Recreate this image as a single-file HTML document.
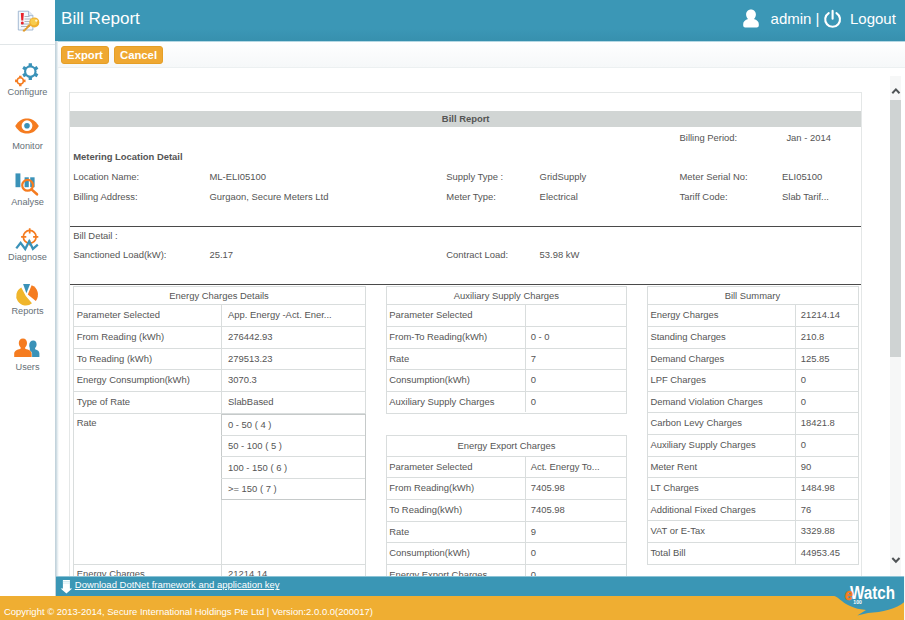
<!DOCTYPE html>
<html>
<head>
<meta charset="utf-8">
<title>Bill Report</title>
<style>
*{box-sizing:border-box;}
html,body{margin:0;padding:0;width:905px;height:620px;overflow:hidden;background:#fff;}
body{font-family:"Liberation Sans",Arial,sans-serif;font-size:9.43px;color:#555;position:relative;}
.abs{position:absolute;}
#side{position:absolute;left:0;top:0;width:56px;height:597px;background:#fff;}
#edge{position:absolute;left:55px;top:41px;width:4px;height:556px;background:linear-gradient(to right,#bfd0d9 0,#c9d8e0 30%,#e4ecf0 60%,#ffffff 100%);}
#logo{position:absolute;left:0;top:0;width:55px;height:45px;border-bottom:1px solid #e1e6e8;}
.nav{position:absolute;left:0;width:55px;text-align:center;font-size:9.2px;line-height:12px;color:#667077;white-space:nowrap;}
.ico{position:absolute;left:0;top:0;}
#hdr{position:absolute;left:55px;top:0;width:850px;height:41px;background:linear-gradient(to bottom,#3b97b6 0%,#3b97b6 70%,#3790ae 100%);color:#fff;}
#hdr .title{position:absolute;left:6px;top:9.3px;font-size:17.1px;line-height:20px;white-space:nowrap;}
#hdr .usr{position:absolute;top:9px;font-size:15px;line-height:20px;white-space:nowrap;}
#tool{position:absolute;left:58px;top:41px;width:847px;height:27px;background:linear-gradient(to bottom,#ffffff 0,#fafbfc 50%,#f6f8f9 100%);border-bottom:1px solid #ecf0f1;border-top:1px solid #b5d8e4;}
.btn{position:absolute;top:4px;height:18px;border-radius:3px;background:#efa832;border:1px solid #e59f27;color:#fff;font-weight:bold;font-size:11.3px;line-height:16px;text-align:center;white-space:nowrap;}
#content{position:absolute;left:0;top:68px;width:905px;height:508px;overflow:hidden;}
#sb{position:absolute;left:890px;top:76px;width:11px;height:500px;background:#f6f7f7;}
#sb .thumb{position:absolute;left:0;top:24.4px;width:11px;height:256.4px;background:#cfd3d3;}
#dl{position:absolute;left:56px;top:576px;width:848px;height:21px;background:#3a96b5;color:#fff;border-top:1px solid #8cc3d6;}
#dl span{position:absolute;left:18.8px;top:2.4px;font-size:9.48px;line-height:12px;color:#fff;text-decoration:underline;white-space:nowrap;}
#foot{position:absolute;left:0;top:596px;width:905px;height:24px;background:#efae32;color:#fff;}
#foot span{position:absolute;left:4px;top:10.4px;font-size:9.47px;line-height:12px;white-space:nowrap;}
.box{position:absolute;left:69px;top:92px;width:793px;height:520px;border:1px solid #e4e7e7;border-bottom:none;}
.gbar{position:absolute;left:70px;top:111px;width:791px;height:16px;background:#d1d5d4;}
.t{position:absolute;white-space:nowrap;line-height:12px;}
.b{font-weight:bold;}
.hl{position:absolute;height:1px;background:#4a4a4a;}
.tb{position:absolute;border:1px solid #d9dddd;}
.ln{position:absolute;background:#d9dddd;}
</style>
</head>
<body>
<div id="side">
<div id="logo"></div>
<svg class="ico" width="56" height="45" viewBox="0 0 56 45">
<path d="M18.3 11.2h10.200l4.400 4.400v14.400h-14.600z" fill="#f4f8fc" stroke="#8fa9c9" stroke-width="0.8"/>
<path d="M28.500 11.200v4.400h4.400" fill="#dfe9f4" stroke="#8fa9c9" stroke-width="0.7"/>
<path d="M24.500 16.500h5M24.500 19h6.500M24.500 21.500h6.500M21 24h9M21 26.500h9" stroke="#9aa6b4" stroke-width="0.8"/>
<path d="M20.800 13h3l-.5 7.600h-2z" fill="#e8222b"/><circle cx="22.300" cy="23" r="1.500" fill="#e8222b"/>
<path d="M31.800 24.500l-7.500 7.200l-1.600-.4l.3-1.500l1.500-.3l.2-1.300l1.400-.2l.3-1.400l2.500-2.300z" fill="#e09a2a"/>
<circle cx="34.300" cy="22.400" r="5" fill="#f0b02e"/><circle cx="33.800" cy="21.800" r="3.400" fill="#f7cc4e"/><circle cx="36.300" cy="20.600" r="1.200" fill="#fff4d0"/>
</svg>
<svg class="ico" width="56" height="400" viewBox="0 0 56 400">
<path fill="#3a92b8" d="M31.98 76.84 L31.95 79.94 L28.65 79.94 L28.62 76.84 L26.61 75.68 L23.91 77.20 L22.25 74.34 L24.92 72.76 L24.92 70.44 L22.25 68.86 L23.91 66.00 L26.61 67.52 L28.62 66.36 L28.65 63.26 L31.95 63.26 L31.98 66.36 L33.99 67.52 L36.69 66.00 L38.35 68.86 L35.68 70.44 L35.68 72.76 L38.35 74.34 L36.69 77.20 L33.99 75.68Z"/><circle cx="30.3" cy="71.6" r="6.3" fill="#3a92b8"/><circle cx="30.3" cy="71.6" r="4.1" fill="#fff"/>
<path fill="#f57c20" d="M21.42 83.68 L21.59 86.14 L19.01 86.14 L19.18 83.68 L17.52 82.02 L15.06 82.19 L15.06 79.61 L17.52 79.78 L19.18 78.12 L19.01 75.66 L21.59 75.66 L21.42 78.12 L23.08 79.78 L25.54 79.61 L25.54 82.19 L23.08 82.02Z"/><circle cx="20.3" cy="80.9" r="3.8" fill="#f57c20"/><circle cx="20.3" cy="80.9" r="2.3" fill="#fff"/>
<path fill="#f57c20" d="M15.2 126 C19 119.7 23 118.4 27 118.4 C31 118.4 35 119.7 38.8 126 C35 132.3 31 133.6 27 133.6 C23 133.6 19 132.3 15.2 126Z"/><circle cx="27" cy="125.7" r="5.4" fill="#fff"/><circle cx="27" cy="125.7" r="2.8" fill="#3a92b8"/>
<rect x="15.5" y="173.4" width="4.9" height="13.8" fill="#3a92b8"/><rect x="24.6" y="177.3" width="4.2" height="9.9" fill="#3a92b8"/><rect x="30.2" y="177.3" width="4.4" height="9.9" fill="#3a92b8"/>
<circle cx="27.6" cy="185.3" r="5.4" fill="none" stroke="#f57c20" stroke-width="2.2"/><path d="M31.8 189.6 L37 194.3" stroke="#f57c20" stroke-width="2.6" stroke-linecap="round"/>
<circle cx="29.7" cy="236.8" r="6.4" fill="none" stroke="#f57c20" stroke-width="1.7"/><path d="M29.7 228.20000000000002v5.2M29.7 245.4v-5.2M21.1 236.8h5.2M38.3 236.8h-5.2" stroke="#f57c20" stroke-width="1.7" fill="none"/>
<path d="M16.3 248.4 L20.6 242.8 L25.2 249 L29.2 241.2 L32.9 248.8 L37.8 244.6" fill="none" stroke="#3a92b8" stroke-width="2.3" stroke-linejoin="miter"/>
<path fill="#f0b62c" d="M25.80 296.00L31.97 303.35A9.6 9.6 0 1 1 21.29 287.52Z"/>
<path fill="#f57c20" d="M27.80 294.60L31.62 285.14A10.2 10.2 0 0 1 35.84 300.88Z"/>
<path fill="#3a92b8" d="M23.1 283.9 L30.1 283.9 L26.4 293.2Z"/>
<path fill="#3a92b8" d="M33.3 340.4c2 0 3.3 1.6 3.3 3.8c0 1.6-.6 2.9-1.5 3.7v1.3c2.6.8 4.3 1.9 4.3 4.2v3.6h-9.6v-9c-.4-.8-.6-1.800-.6-2.800c0-2.800 1.700-4.800 4.100-4.800z"/>
<path fill="#f57c20" stroke="#fff" stroke-width="0.9" paint-order="stroke" d="M23 338.400c2.500 0 4 2 4 4.600c0 1.800-.7 3.400-1.800 4.300v1.500c3.800 1 6.400 2.300 6.400 5v3.200h-17.400v-3.200c0-2.700 2.600-4 6.400-5v-1.500c-1.100-.9-1.800-2.500-1.800-4.300c0-2.600 1.600-4.600 4.200-4.600z"/>
</svg>
<div class="nav" style="top:85.8px">Configure</div>
<div class="nav" style="top:140.1px">Monitor</div>
<div class="nav" style="top:195.8px">Analyse</div>
<div class="nav" style="top:250.8px">Diagnose</div>
<div class="nav" style="top:305.1px">Reports</div>
<div class="nav" style="top:360.8px">Users</div>
</div>
<div id="edge"></div>
<div id="hdr">
<div class="title">Bill Report</div>
<svg class="ico" style="left:680px" width="120" height="41" viewBox="680 0 120 41">
<path fill="#fff" d="M696 9.400c2.900 0 4.900 2.200 4.900 5c0 1.900-.8 3.500-2 4.500c2.900.9 4.900 2.500 4.900 5v1.700c0 1.100-.9 2-2 2h-11.600c-1.100 0-2-.9-2-2v-1.700c0-2.500 2-4.100 4.900-5c-1.200-1-2-2.600-2-4.500c0-2.800 2-5 4.900-5z"/>
<path fill="none" stroke="#fff" stroke-width="2.100" stroke-linecap="round" d="M773.700 13.100a7.400 7.400 0 1 0 7.800 0M777.600 10.900v7.800"/>
</svg>
<div class="usr" style="left:715.6px">admin |</div>
<div class="usr" style="left:795px">Logout</div>
</div>
<div id="tool">
<div class="btn" style="left:3px;width:48px">Export</div>
<div class="btn" style="left:56px;width:49px">Cancel</div>
</div>
<div id="content">
<div class="box" style="top:24px"></div>
<div class="gbar" style="top:43px"></div>
<div class="t b" style="left:315.7px;width:300px;text-align:center;top:45.3px">Bill Report</div>
<div class="t " style="left:679.5px;top:63.5px;">Billing Period:</div>
<div class="t " style="left:786.4px;top:63.5px;">Jan - 2014</div>
<div class="t b" style="left:73.2px;top:82.5px;">Metering Location Detail</div>
<div class="t " style="left:73.2px;top:102.5px;">Location Name:</div>
<div class="t " style="left:209.5px;top:102.5px;">ML-ELI05100</div>
<div class="t " style="left:446.3px;top:102.5px;">Supply Type :</div>
<div class="t " style="left:539.6px;top:102.5px;">GridSupply</div>
<div class="t " style="left:679.5px;top:102.5px;">Meter Serial No:</div>
<div class="t " style="left:782.0px;top:102.5px;">ELI05100</div>
<div class="t " style="left:73.2px;top:123.3px;">Billing Address:</div>
<div class="t " style="left:209.5px;top:123.3px;">Gurgaon, Secure Meters Ltd</div>
<div class="t " style="left:446.3px;top:123.3px;">Meter Type:</div>
<div class="t " style="left:539.6px;top:123.3px;">Electrical</div>
<div class="t " style="left:679.5px;top:123.3px;">Tariff Code:</div>
<div class="t " style="left:782.0px;top:123.3px;">Slab Tarif...</div>
<div class="hl" style="left:70px;top:158px;width:791px"></div>
<div class="t " style="left:73.2px;top:162.2px;">Bill Detail :</div>
<div class="t " style="left:73.2px;top:181.2px;">Sanctioned Load(kW):</div>
<div class="t " style="left:209.5px;top:181.2px;">25.17</div>
<div class="t " style="left:446.3px;top:181.2px;">Contract Load:</div>
<div class="t " style="left:539.6px;top:181.2px;">53.98 kW</div>
<div class="hl" style="left:70px;top:216px;width:791px"></div>
<div class="tb" style="left:73.3px;top:217.5px;width:292.5px;height:400px"></div>
<div class="t " style="left:69.1px;width:300px;text-align:center;top:221.6px">Energy Charges Details</div>
<div class="ln" style="left:73.3px;top:236.4px;width:291.5px;height:1px"></div>
<div class="t " style="left:76.7px;top:241.4px;">Parameter Selected</div>
<div class="t " style="left:228.0px;top:241.4px;">App. Energy -Act. Ener...</div>
<div class="ln" style="left:73.3px;top:258.0px;width:291.5px;height:1px"></div>
<div class="t " style="left:76.7px;top:263.0px;">From Reading (kWh)</div>
<div class="t " style="left:228.0px;top:263.0px;">276442.93</div>
<div class="ln" style="left:73.3px;top:279.6px;width:291.5px;height:1px"></div>
<div class="t " style="left:76.7px;top:284.6px;">To Reading (kWh)</div>
<div class="t " style="left:228.0px;top:284.6px;">279513.23</div>
<div class="ln" style="left:73.3px;top:301.3px;width:291.5px;height:1px"></div>
<div class="t " style="left:76.7px;top:306.3px;">Energy Consumption(kWh)</div>
<div class="t " style="left:228.0px;top:306.3px;">3070.3</div>
<div class="ln" style="left:73.3px;top:322.9px;width:291.5px;height:1px"></div>
<div class="t " style="left:76.7px;top:327.9px;">Type of Rate</div>
<div class="t " style="left:228.0px;top:327.9px;">SlabBased</div>
<div class="ln" style="left:73.3px;top:344.5px;width:291.5px;height:1px"></div>
<div class="t " style="left:76.7px;top:348.7px;">Rate</div>
<div class="ln" style="left:221.4px;top:236.4px;width:1px;height:400px"></div>
<div class="tb" style="left:221.4px;top:345.6px;width:144.4px;height:86.4px;border-color:#c6caca"></div>
<div class="t " style="left:228.0px;top:350.9px;">0 - 50 ( 4 )</div>
<div class="ln" style="left:221.4px;top:367.0px;width:143.4px;height:1px"></div>
<div class="t " style="left:228.0px;top:372.2px;">50 - 100 ( 5 )</div>
<div class="ln" style="left:221.4px;top:388.3px;width:143.4px;height:1px"></div>
<div class="t " style="left:228.0px;top:393.6px;">100 - 150 ( 6 )</div>
<div class="ln" style="left:221.4px;top:409.7px;width:143.4px;height:1px"></div>
<div class="t " style="left:228.0px;top:414.9px;">&gt;= 150 ( 7 )</div>
<div class="ln" style="left:73.3px;top:496.3px;width:291.5px;height:1px"></div>
<div class="t " style="left:76.7px;top:499.9px;">Energy Charges</div>
<div class="t " style="left:228.0px;top:499.9px;">21214.14</div>
<div class="tb" style="left:386.3px;top:217.5px;width:241.2px;height:128.0px"></div>
<div class="t " style="left:356.4px;width:300px;text-align:center;top:221.6px">Auxiliary Supply Charges</div>
<div class="ln" style="left:386.3px;top:236.4px;width:240.2px;height:1px"></div>
<div class="t " style="left:389.3px;top:241.4px;">Parameter Selected</div>
<div class="ln" style="left:386.3px;top:258.0px;width:240.2px;height:1px"></div>
<div class="t " style="left:389.3px;top:263.0px;">From-To Reading(kWh)</div>
<div class="t " style="left:530.7px;top:263.0px;">0 - 0</div>
<div class="ln" style="left:386.3px;top:279.6px;width:240.2px;height:1px"></div>
<div class="t " style="left:389.3px;top:284.6px;">Rate</div>
<div class="t " style="left:530.7px;top:284.6px;">7</div>
<div class="ln" style="left:386.3px;top:301.3px;width:240.2px;height:1px"></div>
<div class="t " style="left:389.3px;top:306.3px;">Consumption(kWh)</div>
<div class="t " style="left:530.7px;top:306.3px;">0</div>
<div class="ln" style="left:386.3px;top:322.9px;width:240.2px;height:1px"></div>
<div class="t " style="left:389.3px;top:327.9px;">Auxiliary Supply Charges</div>
<div class="t " style="left:530.7px;top:327.9px;">0</div>
<div class="ln" style="left:524.5px;top:236.4px;width:1px;height:108.1px"></div>
<div class="tb" style="left:386.3px;top:366.6px;width:241.2px;height:173.5px"></div>
<div class="t " style="left:356.4px;width:300px;text-align:center;top:371.8px">Energy Export Charges</div>
<div class="ln" style="left:386.3px;top:387.8px;width:240.2px;height:1px"></div>
<div class="t " style="left:389.3px;top:392.8px;">Parameter Selected</div>
<div class="t " style="left:530.7px;top:392.8px;">Act. Energy To...</div>
<div class="ln" style="left:386.3px;top:409.4px;width:240.2px;height:1px"></div>
<div class="t " style="left:389.3px;top:414.4px;">From Reading(kWh)</div>
<div class="t " style="left:530.7px;top:414.4px;">7405.98</div>
<div class="ln" style="left:386.3px;top:431.0px;width:240.2px;height:1px"></div>
<div class="t " style="left:389.3px;top:436.1px;">To Reading(kWh)</div>
<div class="t " style="left:530.7px;top:436.1px;">7405.98</div>
<div class="ln" style="left:386.3px;top:452.7px;width:240.2px;height:1px"></div>
<div class="t " style="left:389.3px;top:457.7px;">Rate</div>
<div class="t " style="left:530.7px;top:457.7px;">9</div>
<div class="ln" style="left:386.3px;top:474.3px;width:240.2px;height:1px"></div>
<div class="t " style="left:389.3px;top:479.3px;">Consumption(kWh)</div>
<div class="t " style="left:530.7px;top:479.3px;">0</div>
<div class="ln" style="left:386.3px;top:495.9px;width:240.2px;height:1px"></div>
<div class="t " style="left:389.3px;top:500.9px;">Energy Export Charges</div>
<div class="t " style="left:530.7px;top:500.9px;">0</div>
<div class="ln" style="left:386.3px;top:517.5px;width:240.2px;height:1px"></div>
<div class="t " style="left:389.3px;top:522.5px;"></div>
<div class="ln" style="left:524.5px;top:387.8px;width:1px;height:151.3px"></div>
<div class="tb" style="left:647.0px;top:217.5px;width:211.8px;height:279.1px"></div>
<div class="t " style="left:602.4px;width:300px;text-align:center;top:221.6px">Bill Summary</div>
<div class="ln" style="left:647.0px;top:236.4px;width:210.8px;height:1px"></div>
<div class="t " style="left:650.4px;top:241.4px;">Energy Charges</div>
<div class="t " style="left:800.7px;top:241.4px;">21214.14</div>
<div class="ln" style="left:647.0px;top:258.0px;width:210.8px;height:1px"></div>
<div class="t " style="left:650.4px;top:263.0px;">Standing Charges</div>
<div class="t " style="left:800.7px;top:263.0px;">210.8</div>
<div class="ln" style="left:647.0px;top:279.6px;width:210.8px;height:1px"></div>
<div class="t " style="left:650.4px;top:284.6px;">Demand Charges</div>
<div class="t " style="left:800.7px;top:284.6px;">125.85</div>
<div class="ln" style="left:647.0px;top:301.2px;width:210.8px;height:1px"></div>
<div class="t " style="left:650.4px;top:306.2px;">LPF Charges</div>
<div class="t " style="left:800.7px;top:306.2px;">0</div>
<div class="ln" style="left:647.0px;top:322.8px;width:210.8px;height:1px"></div>
<div class="t " style="left:650.4px;top:327.8px;">Demand Violation Charges</div>
<div class="t " style="left:800.7px;top:327.8px;">0</div>
<div class="ln" style="left:647.0px;top:344.4px;width:210.8px;height:1px"></div>
<div class="t " style="left:650.4px;top:349.4px;">Carbon Levy Charges</div>
<div class="t " style="left:800.7px;top:349.4px;">18421.8</div>
<div class="ln" style="left:647.0px;top:366.0px;width:210.8px;height:1px"></div>
<div class="t " style="left:650.4px;top:371.0px;">Auxiliary Supply Charges</div>
<div class="t " style="left:800.7px;top:371.0px;">0</div>
<div class="ln" style="left:647.0px;top:387.6px;width:210.8px;height:1px"></div>
<div class="t " style="left:650.4px;top:392.6px;">Meter Rent</div>
<div class="t " style="left:800.7px;top:392.6px;">90</div>
<div class="ln" style="left:647.0px;top:409.2px;width:210.8px;height:1px"></div>
<div class="t " style="left:650.4px;top:414.2px;">LT Charges</div>
<div class="t " style="left:800.7px;top:414.2px;">1484.98</div>
<div class="ln" style="left:647.0px;top:430.8px;width:210.8px;height:1px"></div>
<div class="t " style="left:650.4px;top:435.8px;">Additional Fixed Charges</div>
<div class="t " style="left:800.7px;top:435.8px;">76</div>
<div class="ln" style="left:647.0px;top:452.4px;width:210.8px;height:1px"></div>
<div class="t " style="left:650.4px;top:457.4px;">VAT or E-Tax</div>
<div class="t " style="left:800.7px;top:457.4px;">3329.88</div>
<div class="ln" style="left:647.0px;top:474.0px;width:210.8px;height:1px"></div>
<div class="t " style="left:650.4px;top:479.0px;">Total Bill</div>
<div class="t " style="left:800.7px;top:479.0px;">44953.45</div>
<div class="ln" style="left:795.4px;top:236.4px;width:1px;height:259.2px"></div>
</div>
<div id="sb"><div class="thumb"></div>
<svg class="abs" style="left:0;top:0" width="12" height="500" viewBox="0 0 12 500"><path d="M2.3 17.3 L5.9 13.4 L9.5 17.3" fill="none" stroke="#4f5456" stroke-width="2"/><path d="M2.3 482 L5.9 485.8 L9.5 482" fill="none" stroke="#4f5456" stroke-width="2"/></svg>
</div>
<div id="dl"><svg class="abs" style="left:0;top:-1px" width="20" height="21" viewBox="56 576 20 21"><path fill="#fff" d="M62.9 580h7v8.600h2.300l-5.800 5l-5.800-5h2.300z"/><path d="M62.9 581.500h7M62.900 583.100h7" stroke="#b9dbe7" stroke-width="0.600"/></svg><span>Download DotNet framework and application key</span></div>
<div id="foot"><span>Copyright © 2013-2014, Secure International Holdings Pte Ltd | Version:2.0.0.0(200017)</span></div>
<svg class="ico" style="left:780px;top:560px" width="125" height="60" viewBox="780 560 125 60">
<path fill="#3a96b5" d="M833 596 C839 596 841 604 857.500 608.800 L866 609.900 L857.300 615.400 L868 613 C882 612.500 897 608.500 904 602.300 L904 596Z"/>
<rect x="904" y="576" width="1" height="44" fill="#f4f6f6"/>
<text x="850" y="598.600" font-family="Liberation Sans, sans-serif" font-weight="bold" font-size="18" fill="#fff" textLength="45" lengthAdjust="spacingAndGlyphs">Watch</text>
<text transform="translate(845.100 600.300) scale(0.840 1)" x="0" y="0" style="font:italic bold 16.5px 'Liberation Sans',sans-serif" fill="#f57c20" stroke="#f57c20" stroke-width="0.7">e</text>
<text x="853.300" y="603.800" font-family="Liberation Sans, sans-serif" font-weight="bold" font-size="4.800" fill="#fff" textLength="8.500" lengthAdjust="spacingAndGlyphs">100</text>
</svg>
</body>
</html>
